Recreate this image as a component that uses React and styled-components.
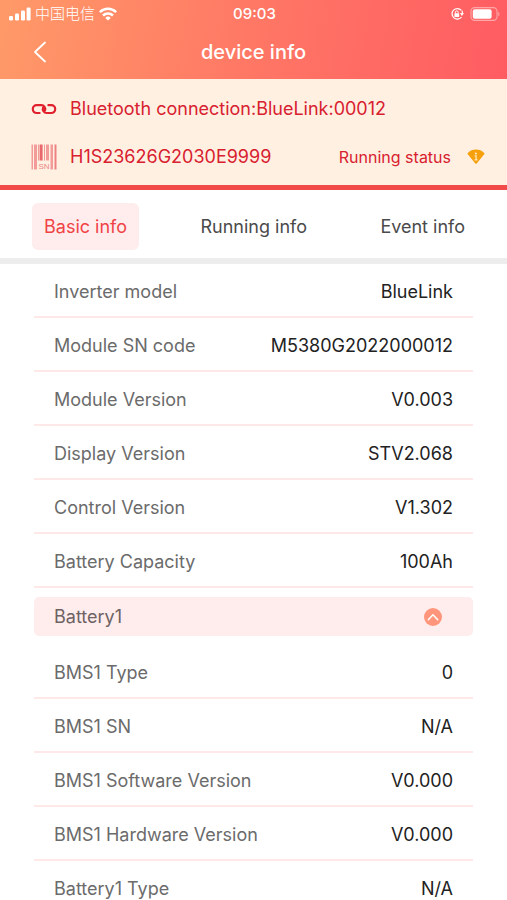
import { Fragment, useState } from "react";
import styled, { createGlobalStyle } from "styled-components";

const tabs = ["Basic info", "Running info", "Event info"];

const deviceRows = [
  ["Inverter model", "BlueLink"],
  ["Module SN code", "M5380G2022000012"],
  ["Module Version", "V0.003"],
  ["Display Version", "STV2.068"],
  ["Control Version", "V1.302"],
  ["Battery Capacity", "100Ah"],
];

const batteryRows = [
  ["BMS1 Type", "0"],
  ["BMS1 SN", "N/A"],
  ["BMS1 Software Version", "V0.000"],
  ["BMS1 Hardware Version", "V0.000"],
  ["Battery1 Type", "N/A"],
];

const SignalIcon = () => (
  <svg width="22" height="14" viewBox="0 0 22 14" fill="#fff" aria-hidden="true">
    <rect x="0" y="9" width="4" height="4.5" rx="1.3" />
    <rect x="6" y="6.5" width="4" height="7" rx="1.3" />
    <rect x="12" y="3.5" width="4" height="10" rx="1.3" />
    <rect x="17.6" y="0.5" width="4" height="13" rx="1.3" />
  </svg>
);

const WifiIcon = () => (
  <svg width="18" height="14" viewBox="0 0 18 14" aria-hidden="true">
    <g fill="none" stroke="#fff" strokeWidth="2.5">
      <path d="M0.9 5.1a11.6 11.6 0 0 1 16.2 0" />
      <path d="M4 8.5a7.1 7.1 0 0 1 10 0" />
    </g>
    <path d="M9 13.6 6.3 10.9a3.8 3.8 0 0 1 5.4 0z" fill="#fff" />
  </svg>
);

const RotationLockIcon = () => (
  <svg width="14" height="14" viewBox="0 0 14 14" aria-hidden="true">
    <path
      d="M11.3 3.3A5.3 5.3 0 1 0 11.6 10"
      fill="none"
      stroke="#fff"
      strokeWidth="1.2"
    />
    <path d="M12 3.6a5.4 5.4 0 0 1 .3 3" fill="none" stroke="#fff" strokeWidth="1.2" />
    <path d="m10 6 4 .2-2.2 2.8z" fill="#fff" />
    <rect x="4.4" y="6.2" width="4.8" height="3.7" rx="0.6" fill="#fff" />
    <path d="M5.4 6.4V5.3a1.4 1.4 0 0 1 2.8 0v1.1" fill="none" stroke="#fff" />
  </svg>
);

const BatteryIcon = () => (
  <svg width="30" height="14" viewBox="0 0 30 14" aria-hidden="true">
    <rect
      x="1"
      y="0.6"
      width="26"
      height="12.8"
      rx="3.6"
      fill="none"
      stroke="#fff"
      strokeOpacity="0.45"
      strokeWidth="1.1"
    />
    <rect x="2.8" y="2.2" width="18.8" height="9.6" rx="2" fill="#fff" />
    <path d="M28.2 4.8a2.5 2.5 0 0 1 0 4.4z" fill="#fff" fillOpacity="0.45" />
  </svg>
);

const BackIcon = () => (
  <svg width="14" height="24" viewBox="0 0 14 24" aria-hidden="true">
    <path
      d="M12 2.5 2 12l10 9.5"
      fill="none"
      stroke="#fff"
      strokeWidth="1.8"
      strokeLinecap="round"
      strokeLinejoin="round"
    />
  </svg>
);

const LinkIcon = () => (
  <svg width="26" height="26" viewBox="0 0 26 26" aria-hidden="true">
    <g fill="none" stroke="#e0202c" strokeWidth="2.2" strokeLinecap="round">
      <path d="M8.6 17H5.7a3.9 3.9 0 0 1 0-7.8h4.6a3.9 3.9 0 0 1 3.6 5.4" />
      <path d="M17.4 9.2h2.9a3.9 3.9 0 0 1 0 7.8h-4.6a3.9 3.9 0 0 1-3.6-5.4" />
    </g>
  </svg>
);

const BarcodeIcon = () => (
  <svg width="26" height="26" viewBox="0 0 26 26" aria-hidden="true">
    <g fill="#f39b99">
      <rect x="0.5" y="0.5" width="1.5" height="25" />
      <rect x="3" y="0.5" width="3" height="25" />
      <rect x="7" y="0.5" width="1" height="16" />
      <rect x="8.6" y="0.5" width="3" height="16" fill="#e8686b" />
      <rect x="13" y="0.5" width="1" height="16" />
      <rect x="15" y="0.5" width="3" height="16" />
      <rect x="19.5" y="0.5" width="2.5" height="25" />
      <rect x="23.5" y="0.5" width="2" height="25" fill="#ee8282" />
    </g>
    <text
      x="13"
      y="25"
      textAnchor="middle"
      fontFamily="Liberation Sans, sans-serif"
      fontSize="8"
      fill="#ee8482"
    >
      SN
    </text>
  </svg>
);

const StatusIcon = () => (
  <svg width="18" height="16" viewBox="0 0 18 16" aria-hidden="true">
    <path
      d="M0.6 4.2C3 1.7 5.8 0.6 9 0.6s6 1.1 8.4 3.6c.2.2.2.5 0 .8L9.7 14.6c-.4.5-1 .5-1.4 0L.6 5c-.2-.3-.2-.6 0-.8z"
      fill="#f5a00c"
    />
    <circle cx="8.9" cy="4.4" r="1" fill="#fff0d0" />
    <path d="M7.6 6.8h1.5v4M7.6 10.8h3" fill="none" stroke="#ffe9bf" strokeWidth="1.2" />
  </svg>
);

const ToggleIcon = () => (
  <svg width="18" height="18" viewBox="0 0 18 18" aria-hidden="true">
    <circle cx="9" cy="9" r="9" fill="#ff967c" />
    <path
      d="m4.3 11.7 4.7-4.9 4.7 4.9"
      fill="none"
      stroke="#fff"
      strokeWidth="1.5"
      strokeLinecap="round"
      strokeLinejoin="round"
    />
  </svg>
);

const InfoList = ({ rows }) => (
  <List>
    {rows.map(([label, value]) => (
      <Row key={label}>
        <dt>{label}</dt>
        <dd>{value}</dd>
      </Row>
    ))}
  </List>
);

const App = () => {
  const [active, setActive] = useState(tabs[0]);
  const [open, setOpen] = useState(true);

  return (
    <Fragment>
      <GlobalStyle />
      <Header>
        <StatusBar>
          <StatusGroup>
            <SignalIcon />
            <Carrier>中国电信</Carrier>
            <WifiIcon />
          </StatusGroup>
          <Clock>09:03</Clock>
          <StatusGroup $end>
            <RotationLockIcon />
            <BatteryIcon />
          </StatusGroup>
        </StatusBar>
        <TitleBar>
          <BackButton type="button" aria-label="Back">
            <BackIcon />
          </BackButton>
          <h1>device info</h1>
        </TitleBar>
      </Header>
      <Device>
        <DeviceLine>
          <LinkIcon />
          <p>Bluetooth connection:BlueLink:00012</p>
        </DeviceLine>
        <DeviceLine>
          <BarcodeIcon />
          <p>H1S23626G2030E9999</p>
          <RunningStatus>
            Running status
            <StatusIcon />
          </RunningStatus>
        </DeviceLine>
      </Device>
      <Tabs>
        {tabs.map((tab) => (
          <Tab
            key={tab}
            type="button"
            $active={tab === active}
            aria-pressed={tab === active}
            onClick={() => setActive(tab)}
          >
            {tab}
          </Tab>
        ))}
      </Tabs>
      <Content>
        <InfoList rows={deviceRows} />
        <BatteryToggle
          type="button"
          aria-expanded={open}
          onClick={() => setOpen(!open)}
        >
          Battery1
          <ToggleIcon />
        </BatteryToggle>
        {open && <InfoList rows={batteryRows} />}
      </Content>
    </Fragment>
  );
};

export default App;

const GlobalStyle = createGlobalStyle`
  * {
    box-sizing: border-box;
  }

  html {
    scrollbar-width: none;
  }

  body {
    margin: 0;
    background: #fff;
    color: #222;
    font-family: Inter, "Noto Sans CJK SC", sans-serif;
    font-size: 18px;
    line-height: 24px;
  }

  h1,
  p,
  dl,
  dd {
    margin: 0;
  }

  button {
    border: 0;
    padding: 0;
    background: none;
    font: inherit;
    cursor: pointer;
  }

  svg {
    display: block;
    flex: none;
  }
`;

const Header = styled.header`
  background: linear-gradient(100deg, #ff9a68 0%, #ff7765 50%, #ff5c62 100%);
  color: #fff;
`;

const StatusBar = styled.div`
  display: grid;
  grid-template-columns: 1fr auto 1fr;
  align-items: center;
  height: 27px;
  padding: 0 7px 0 9px;
`;

const StatusGroup = styled.div`
  display: flex;
  align-items: center;
  justify-content: ${({ $end }) => ($end ? "flex-end" : "flex-start")};
  gap: ${({ $end }) => ($end ? "6px" : "4px")};
`;

const Carrier = styled.span`
  font-size: 15px;
  font-weight: 300;
`;

const Clock = styled.span`
  font-size: 15px;
  font-weight: 500;
`;

const TitleBar = styled.div`
  display: grid;
  grid-template-columns: 1fr auto 1fr;
  align-items: center;
  height: 52px;
  padding: 0 32px 2px;

  h1 {
    font-size: 20px;
    font-weight: 500;
    line-height: 24px;
  }
`;

const BackButton = styled.button`
  justify-self: start;
  padding: 4px 1px;
`;

const Device = styled.section`
  display: grid;
  gap: 22px;
  padding: 17px 22px 15px 31px;
  background: #fff0e2;
  border-bottom: 5px solid #f24a48;
  color: #d8202f;
`;

const DeviceLine = styled.div`
  display: flex;
  align-items: center;
  gap: 13px;
`;

const RunningStatus = styled.p`
  display: flex;
  align-items: center;
  gap: 16px;
  margin-left: auto;
  font-size: 16px;
`;

const Tabs = styled.nav`
  display: flex;
  justify-content: space-between;
  padding: 13px 30px 8px 32px;
  border-bottom: 6px solid #ededed;
`;

const Tab = styled.button`
  height: 47px;
  padding: 0 12px;
  border-radius: 6px;
  background: ${({ $active }) => ($active ? "#ffecec" : "transparent")};
  color: ${({ $active }) => ($active ? "#f04346" : "#4a4a4a")};
`;

const Content = styled.main`
  padding: 0 34px;
`;

const List = styled.dl`
  display: flex;
  flex-direction: column;
`;

const Row = styled.div`
  display: flex;
  align-items: center;
  justify-content: space-between;
  height: 54px;
  padding: 3px 20px 0;
  border-bottom: 2px solid #ffe8e8;

  dt {
    color: #6b6b6b;
  }
`;

const BatteryToggle = styled.button`
  display: flex;
  align-items: center;
  justify-content: space-between;
  width: 100%;
  height: 39px;
  margin: 9px 0;
  padding: 0 31px 0 20px;
  border-radius: 5px;
  background: #ffecec;
  color: #6e6263;
`;
